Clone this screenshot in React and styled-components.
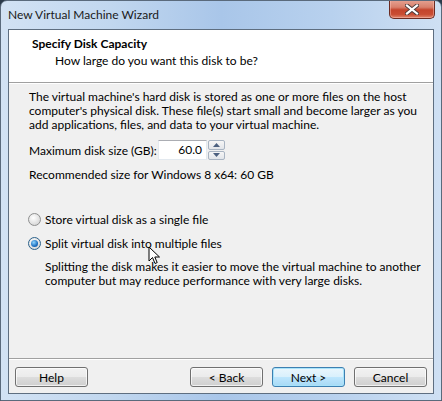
import styled, { createGlobalStyle, css } from "styled-components";

const GlobalStyle = createGlobalStyle`
  html, body {
    margin: 0;
    padding: 0;
    background: #2b3a4a;
  }
  body {
    font-family: Lato, "Open Sans", sans-serif;
    font-size: 12px;
    color: #000;
  }
`;

const Window = styled.div`
  position: relative;
  width: 442px;
  height: 401px;
  box-sizing: border-box;
  border: 1px solid #5a6a7c;
  border-radius: 7px 7px 0 0;
  background: linear-gradient(
    to right,
    #d2e2f4 0%,
    #c1d7ef 25%,
    #a9c6e9 50%,
    #b8d1ee 75%,
    #cfe0f3 100%
  );
  display: flex;
  flex-direction: column;
  overflow: hidden;
`;

const TitleBar = styled.div`
  height: 28px;
  display: flex;
  align-items: flex-start;
  padding-left: 7px;
`;

const Caption = styled.div`
  font-size: 12px;
  line-height: 28px;
  color: #1a1a1a;
`;

const CloseButton = styled.div`
  margin-left: auto;
  margin-right: 6px;
  margin-top: -1px;
  width: 46px;
  height: 19px;
  box-sizing: border-box;
  border: 1px solid #6b2b22;
  border-top: none;
  border-radius: 0 0 5px 5px;
  background: linear-gradient(
    to bottom,
    #e6a393 0%,
    #d8806c 40%,
    #c4442c 55%,
    #c94d33 80%,
    #e0866d 100%
  );
  box-shadow: inset 0 0 0 1px rgba(255, 200, 190, 0.45);
  display: flex;
  align-items: center;
  justify-content: center;
`;

const Client = styled.div`
  margin: 0 7px;
  height: 365px;
  box-sizing: border-box;
  border: 1px solid #5e6e80;
  background: #f0f0f0;
  display: flex;
  flex-direction: column;
`;

const Header = styled.div`
  height: 53px;
  box-sizing: border-box;
  background: #fff;
  border-bottom: 1px solid #a0a0a0;
  padding: 6px 0 0 23px;
`;

const HeaderTitle = styled.div`
  font-weight: bold;
  line-height: 15px;
`;

const HeaderSub = styled.div`
  margin-top: 2px;
  padding-left: 23px;
  line-height: 15px;
`;

const Body = styled.div`
  flex: 1;
  border-top: 1px solid #fff;
  padding: 6px 20px 0 20px;
`;

const Text = styled.div`
  line-height: 14px;
  white-space: nowrap;
  ${(p) =>
    p.$indent &&
    css`
      padding-left: ${p.$indent}px;
    `}
  ${(p) =>
    p.$top &&
    css`
      margin-top: ${p.$top}px;
    `}
`;

const Row = styled.div`
  display: flex;
  align-items: center;
  margin-top: ${(p) => p.$top || 0}px;
`;

const Label = styled.div`
  width: 129px;
  white-space: nowrap;
`;

const SpinBox = styled.div`
  display: flex;
  height: 20px;
`;

const SpinInput = styled.div`
  width: 49px;
  box-sizing: border-box;
  background: #fff;
  border: 1px solid #e3e9ef;
  border-top-color: #abadb3;
  text-align: right;
  padding-right: 4px;
  line-height: 18px;
`;

const SpinButtons = styled.div`
  width: 17px;
  display: flex;
  flex-direction: column;
  gap: 1px;
  margin-left: 1px;
`;

const SpinButton = styled.div`
  flex: 1;
  box-sizing: border-box;
  border: 1px solid #a9b4c2;
  border-radius: 2px;
  background: linear-gradient(to bottom, #f6f6f6, #e2e5ea);
  display: flex;
  align-items: center;
  justify-content: center;
`;

const RadioRow = styled.label`
  display: flex;
  align-items: center;
  gap: 4px;
  height: 15px;
  white-space: nowrap;
  margin-top: ${(p) => p.$top || 0}px;
`;

const RadioCircle = styled.span`
  width: 13px;
  height: 13px;
  box-sizing: border-box;
  border-radius: 50%;
  border: 1px solid ${(p) => (p.$checked ? "#2c628b" : "#8e8f8f")};
  background: radial-gradient(circle at 40% 35%, #ffffff, #d6d6d6 80%);
  display: flex;
  align-items: center;
  justify-content: center;
  margin-left: -1px;
`;

const RadioDot = styled.span`
  width: 7px;
  height: 7px;
  border-radius: 50%;
  background: radial-gradient(circle at 40% 35%, #8fd6ff, #1e70c0 60%, #0f4c90);
`;

const Footer = styled.div`
  border-top: 1px solid #a0a0a0;
  box-shadow: inset 0 1px 0 #fff;
  padding: 8px 6px 6px 6px;
  display: flex;
  align-items: center;
`;

const Button = styled.button`
  width: 73px;
  height: 20px;
  margin: 0;
  padding: 0;
  font-family: inherit;
  font-size: 12px;
  color: #000;
  border: 1px solid #707070;
  border-radius: 3px;
  background: linear-gradient(
    to bottom,
    #f2f2f2 0%,
    #ebebeb 50%,
    #dddddd 51%,
    #cfcfcf 100%
  );
  box-shadow: inset 0 0 0 1px rgba(255, 255, 255, 0.7);
  & + & {
    margin-left: 9px;
  }
  ${(p) =>
    p.$push &&
    css`
      margin-left: auto !important;
    `}
  ${(p) =>
    p.$default &&
    css`
      border-color: #3c7fb1;
      background: linear-gradient(
        to bottom,
        #eaf6fd 0%,
        #d9f0fc 50%,
        #bee6fd 51%,
        #a7d9f5 100%
      );
      box-shadow: inset 0 0 0 1px #a8e3fa;
    `}
`;

function Cursor() {
  return (
    <svg
      width="14"
      height="20"
      viewBox="0 0 14 20"
      style={{ position: "absolute", left: 147, top: 245 }}
    >
      <path
        d="M1 1 L1 15 L4.5 11.5 L7 17.5 L9.2 16.6 L6.8 11 L11.5 11 Z"
        fill="#fff"
        stroke="#000"
        strokeWidth="1"
        strokeLinejoin="miter"
      />
    </svg>
  );
}

export default function App() {
  return (
    <>
      <GlobalStyle />
      <Window>
        <TitleBar>
          <Caption>New Virtual Machine Wizard</Caption>
          <CloseButton>
            <svg width="14" height="11" viewBox="0 0 14 11">
              <path
                d="M2 1.5 L12 9.5 M12 1.5 L2 9.5"
                stroke="#4a3a3a"
                strokeWidth="4"
                strokeLinecap="square"
              />
              <path
                d="M2 1.5 L12 9.5 M12 1.5 L2 9.5"
                stroke="#fff"
                strokeWidth="2.2"
                strokeLinecap="square"
              />
            </svg>
          </CloseButton>
        </TitleBar>
        <Client>
          <Header>
            <HeaderTitle>Specify Disk Capacity</HeaderTitle>
            <HeaderSub>How large do you want this disk to be?</HeaderSub>
          </Header>
          <Body>
            <Text>
              The virtual machine's hard disk is stored as one or more files on the host
            </Text>
            <Text>
              computer's physical disk. These file(s) start small and become larger as you
            </Text>
            <Text>add applications, files, and data to your virtual machine.</Text>
            <Row $top={8}>
              <Label>Maximum disk size (GB):</Label>
              <SpinBox>
                <SpinInput>60.0</SpinInput>
                <SpinButtons>
                  <SpinButton>
                    <svg width="7" height="4" viewBox="0 0 7 4">
                      <path d="M0 4 L3.5 0 L7 4 Z" fill="#4c607f" />
                    </svg>
                  </SpinButton>
                  <SpinButton>
                    <svg width="7" height="4" viewBox="0 0 7 4">
                      <path d="M0 0 L3.5 4 L7 0 Z" fill="#4c607f" />
                    </svg>
                  </SpinButton>
                </SpinButtons>
              </SpinBox>
            </Row>
            <Text $top={8}>Recommended size for Windows 8 x64: 60 GB</Text>
            <RadioRow $top={30}>
              <RadioCircle />
              Store virtual disk as a single file
            </RadioRow>
            <RadioRow $top={9}>
              <RadioCircle $checked>
                <RadioDot />
              </RadioCircle>
              Split virtual disk into multiple files
            </RadioRow>
            <Text $indent={16} $top={9}>
              Splitting the disk makes it easier to move the virtual machine to another
            </Text>
            <Text $indent={16}>
              computer but may reduce performance with very large disks.
            </Text>
          </Body>
          <Footer>
            <Button>Help</Button>
            <Button $push>&lt; Back</Button>
            <Button $default>Next &gt;</Button>
            <Button>Cancel</Button>
          </Footer>
        </Client>
        <Cursor />
      </Window>
    </>
  );
}
